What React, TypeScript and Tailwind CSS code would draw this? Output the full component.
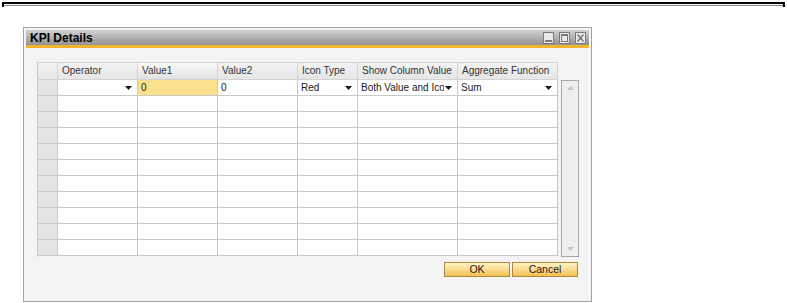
import type { ReactNode } from 'react'

const cols = ['', 'Operator', 'Value1', 'Value2', 'Icon Type', 'Show Column Value', 'Aggregate Function']
const widths = ['w-[20px]', 'w-[80px]', 'w-[80px]', 'w-[80px]', 'w-[60px]', 'w-[100px]', 'w-[100px]']

function Arrow() {
  return (
    <svg width="7" height="4" viewBox="0 0 7 4" className="shrink-0">
      <path d="M0 0h7L3.5 4z" fill="#1a1a1a" />
    </svg>
  )
}

function Cell({ w, children, bg = 'bg-white' }: { w: string; children?: ReactNode; bg?: string }) {
  return (
    <div className={`${w} ${bg} h-[16px] shrink-0 border-r border-b border-[#c9c9c9] flex items-center px-[3px] text-[10px] leading-none text-[#222]`}>
      {children}
    </div>
  )
}

function Drop({ w, text }: { w: string; text: string }) {
  return (
    <Cell w={w}>
      <span className="flex-1 whitespace-nowrap overflow-hidden">{text}</span>
      <span className="pl-[1px] pr-[2px]"><Arrow /></span>
    </Cell>
  )
}

function WinBtn({ kind }: { kind: 'min' | 'max' | 'close' }) {
  return (
    <div className="w-[11px] h-[12px] border border-[#7a7a7a] bg-[#e9e9e9] flex items-center justify-center">
      {kind === 'min' && <div className="w-[7px] h-[2px] bg-[#7a7a7a] mt-[6px]" />}
      {kind === 'max' && <div className="w-[7px] h-[8px] border border-[#7a7a7a] border-t-2" />}
      {kind === 'close' && (
        <svg width="7" height="8" viewBox="0 0 7 8">
          <path d="M0.5 0.5L6.5 7.5M6.5 0.5L0.5 7.5" stroke="#6e6e6e" strokeWidth="1.5" />
        </svg>
      )}
    </div>
  )
}

export default function App() {
  const empty = Array.from({ length: 10 })
  return (
    <div className="w-[787px] h-[303px] bg-white overflow-hidden" style={{ fontFamily: '"Liberation Sans", Arial, sans-serif' }}>
      <div className="mt-[2px] mx-[2px] h-[5px] border-x-2 border-black flex flex-col">
        <div className="h-[2px] bg-black" />
        <div className="h-[1px]" />
        <div className="h-[1px] bg-[#8a8a8a]" />
      </div>

      <div className="ml-[23px] mt-[20px] w-[569px] h-[275px] border border-[#a3a3a3] bg-[#f4f4f4] p-[2px] flex flex-col">
        <div className="h-[15px] bg-gradient-to-b from-[#d2d2d2] to-[#929292] flex items-center pl-[4px] pr-[3px]">
          <span className="flex-1 text-[12px] font-bold text-black leading-none">KPI Details</span>
          <div className="flex gap-[5px]">
            <WinBtn kind="min" />
            <WinBtn kind="max" />
            <WinBtn kind="close" />
          </div>
        </div>
        <div className="h-[3px] bg-[#f1b42c]" />

        <div className="flex mt-[14px] ml-[11px]">
          <div className="border-l border-[#c9c9c9]">
            <div className="flex">
              {cols.map((c, i) => (
                <div
                  key={i}
                  className={`${widths[i]} h-[18px] shrink-0 border-r border-b border-t border-[#d2d2d2] flex items-center px-[4px] text-[10px] leading-none text-[#333] ${i === 2 ? 'bg-gradient-to-b from-[#fbfbfb] to-[#e0e0e0]' : 'bg-gradient-to-b from-[#f2f2f2] to-[#e6e6e6]'}`}
                >
                  {c}
                </div>
              ))}
            </div>
            <div className="flex">
              <Cell w="w-[20px]" bg="bg-[#e4e4e4]" />
              <Drop w="w-[80px]" text="" />
              <Cell w="w-[80px]" bg="bg-[#fbe08e]">0</Cell>
              <Cell w="w-[80px]">0</Cell>
              <Drop w="w-[60px]" text="Red" />
              <Drop w="w-[100px]" text="Both Value and Icon" />
              <Drop w="w-[100px]" text="Sum" />
            </div>
            {empty.map((_, r) => (
              <div key={r} className="flex">
                {widths.map((w, i) => (
                  <Cell key={i} w={w} bg={i === 0 ? 'bg-[#e4e4e4]' : 'bg-white'} />
                ))}
              </div>
            ))}
          </div>

          <div className="ml-[3px] mt-[18px] w-[18px] h-[177px] border border-[#a9a9a9] bg-[#efefef] flex flex-col justify-between items-center py-[5px]">
            <svg width="7" height="4" viewBox="0 0 7 4"><path d="M0 4h7L3.5 0z" fill="#c3c3c3" /></svg>
            <svg width="7" height="4" viewBox="0 0 7 4"><path d="M0 0h7L3.5 4z" fill="#c3c3c3" /></svg>
          </div>
        </div>

        <div className="flex justify-end gap-[2px] mt-[5px] pr-[11px]">
          {['OK', 'Cancel'].map(b => (
            <div key={b} className="w-[66px] h-[15px] border border-[#a88b3e] bg-gradient-to-b from-[#fff4c4] to-[#f4c04c] flex items-center justify-center text-[10.5px] text-[#222] leading-none">
              {b}
            </div>
          ))}
        </div>
      </div>
    </div>
  )
}
